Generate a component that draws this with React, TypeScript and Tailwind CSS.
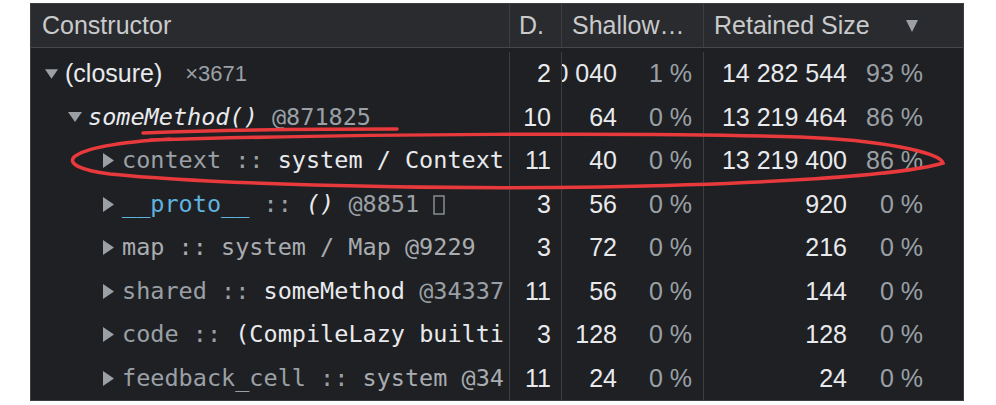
import type { ReactNode } from 'react';

const cols = 'grid grid-cols-[478px_52px_142px_260px]';
const sans = "font-['Liberation_Sans',Arial,sans-serif]";
const mono = "font-['DejaVu_Sans_Mono',monospace] text-[23.5px]";

function Down({ className }: { className: string }) {
  return (
    <svg viewBox="0 0 14 10" className={className}>
      <polygon points="0,0 14,0 7,10" fill="#9aa0a6" />
    </svg>
  );
}

function Right() {
  return (
    <svg viewBox="0 0 11 15" className="w-[11px] h-[15px] shrink-0">
      <polygon points="0,0 11,7.5 0,15" fill="#9aa0a6" />
    </svg>
  );
}

interface RowData {
  name: ReactNode;
  depth: string;
  shallow: string;
  shallowPct: string;
  retained: string;
  retainedPct: string;
}

const G = ({ children }: { children: ReactNode }) => <span className="text-[#9aa0a6]">{children}</span>;
const W = ({ children }: { children: ReactNode }) => <span className="text-[#e8eaed]">{children}</span>;

const child = (content: ReactNode) => (
  <div className="flex items-center pl-[72px] gap-[8px] whitespace-nowrap overflow-hidden">
    <Right />
    <span className={mono}>{content}</span>
  </div>
);

const rows: RowData[] = [
  {
    name: (
      <div className="flex items-center pl-[14px] gap-[7px] whitespace-nowrap">
        <Down className="w-[13px] h-[10px] shrink-0" />
        <span className={`${sans} text-[25px] text-[#e8eaed]`}>(closure)</span>
        <span className={`${sans} text-[22px] text-[#9aa0a6] ml-[16px]`}>×3671</span>
      </div>
    ),
    depth: '2', shallow: '100 040', shallowPct: '1 %', retained: '14 282 544', retainedPct: '93 %',
  },
  {
    name: (
      <div className="flex items-center pl-[37px] gap-[6px] whitespace-nowrap">
        <Down className="w-[14px] h-[10px] shrink-0" />
        <span className={mono}>
          <span className="italic text-[#e8eaed]">someMethod()</span> <G>@871825</G>
        </span>
      </div>
    ),
    depth: '10', shallow: '64', shallowPct: '0 %', retained: '13 219 464', retainedPct: '86 %',
  },
  {
    name: child(<><G>context ::</G> <W>system / Context</W></>),
    depth: '11', shallow: '40', shallowPct: '0 %', retained: '13 219 400', retainedPct: '86 %',
  },
  {
    name: child(
      <>
        <span className="text-[#5fb3e0]">__proto__</span> <G>::</G> <span className="italic text-[#e8eaed]">()</span>{' '}
        <G>@8851</G>{' '}
        <svg viewBox="0 0 12 20" className="inline-block w-[12px] h-[20px] align-[-3px]">
          <rect x="1" y="1" width="10" height="18" fill="none" stroke="#8a8d91" strokeWidth="1.5" />
        </svg>
      </>
    ),
    depth: '3', shallow: '56', shallowPct: '0 %', retained: '920', retainedPct: '0 %',
  },
  {
    name: child(<span className="text-[#a9acb0]">map :: system / Map @9229</span>),
    depth: '3', shallow: '72', shallowPct: '0 %', retained: '216', retainedPct: '0 %',
  },
  {
    name: child(<><G>shared ::</G> <W>someMethod</W> <G>@34337</G></>),
    depth: '11', shallow: '56', shallowPct: '0 %', retained: '144', retainedPct: '0 %',
  },
  {
    name: child(<><G>code ::</G> <W>(CompileLazy builti</W></>),
    depth: '3', shallow: '128', shallowPct: '0 %', retained: '128', retainedPct: '0 %',
  },
  {
    name: child(<><G>feedback_cell ::</G> <span className="text-[#a9acb0]">system @34</span></>),
    depth: '11', shallow: '24', shallowPct: '0 %', retained: '24', retainedPct: '0 %',
  },
];

export default function App() {
  return (
    <div className="relative w-[996px] h-[405px] bg-white pt-[3px] pl-[30px] overflow-hidden">
      <div className={`w-[934px] border border-[#3d3e41] bg-[#1f2023] ${sans}`}>
        {/* header */}
        <div className={`${cols} h-[44px] bg-[#2a2b2e] border-b border-[#46474b] text-[#c8cacc] text-[25px]`}>
          <div className="flex items-center pl-[11px]">Constructor</div>
          <div className="flex items-center pl-[9px] border-l border-[#3d3e41]">D.</div>
          <div className="flex items-center pl-[10px] border-l border-[#3d3e41]">Shallow…</div>
          <div className="flex items-center pl-[10px] border-l border-[#3d3e41]">
            <span>Retained Size</span>
            <svg viewBox="0 0 12 12" className="w-[12px] h-[12px] ml-[36px]">
              <polygon points="0,0 12,0 6,12" fill="#9aa0a6" />
            </svg>
          </div>
        </div>

        {/* body */}
        <div className="pt-[4px]">
          {rows.map((r, i) => (
            <div key={i} className={`${cols} h-[43.5px] text-[25px]`}>
              <div className="flex items-center overflow-hidden">{r.name}</div>
              <div className="flex items-center justify-end pr-[10px] border-l border-[#3d3e41] text-[#e8eaed]">
                {r.depth}
              </div>
              <div className="flex items-center justify-end pr-[11px] border-l border-[#3d3e41] overflow-hidden whitespace-nowrap">
                <span className="shrink-0 text-[#e8eaed]">{r.shallow}</span>
                <span className="shrink-0 w-[75px] text-right text-[#9aa0a6]">{r.shallowPct}</span>
              </div>
              <div className="flex items-center justify-end pr-[40px] border-l border-[#3d3e41] whitespace-nowrap">
                <span className="text-[#e8eaed]">{r.retained}</span>
                <span className="w-[76px] text-right text-[#9aa0a6]">{r.retainedPct}</span>
              </div>
            </div>
          ))}
        </div>
      </div>

      {/* hand-drawn annotation */}
      <svg
        viewBox="0 0 996 405"
        className="absolute left-0 top-0 w-[996px] h-[405px] pointer-events-none"
        fill="none"
        stroke="#e8393c"
        strokeWidth="3.5"
        strokeLinecap="round"
      >
        <path d="M143 133 C 220 130, 320 129, 397 129" />
        <path d="M150 140 C 350 134, 650 132, 800 137 C 880 140, 940 152, 943 163 C 900 176, 760 184, 600 187 C 400 190, 200 183, 110 174 C 80 170, 68 164, 74 157 C 85 148, 120 142, 170 139" />
      </svg>
    </div>
  );
}
